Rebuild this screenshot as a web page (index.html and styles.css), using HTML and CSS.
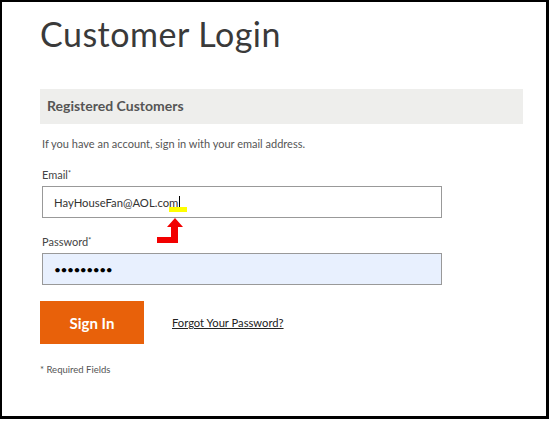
FILE: index.html
```html
<!DOCTYPE html>
<html lang="en">

<head>
    <meta charset="UTF-8">
    <meta name="viewport" content="width=device-width, initial-scale=1.0">
    <title>Customer Login</title>
    <link rel="stylesheet" href="styles.css">
</head>

<body>
    <div class="frame">
        <h1>Customer Login</h1>
        <div class="block-title">Registered Customers</div>
        <form class="login-form" id="loginForm">
            <p class="intro">If you have an account, sign in with your email address.</p>
            <label class="field-label" for="email">Email<span class="req">*</span></label>
            <div class="field-wrap">
                <!-- email field drawn with its caret, like the captured state -->
                <div class="field" id="email">
                    <span class="field-text">HayHouseFan@AOL.com</span><span class="caret"></span>
                    <span class="mark"></span>
                </div>
                <svg class="arrow" width="26" height="25" viewBox="0 0 26 25">
                    <polygon points="18,0 26,9 21,9 21,25 0,25 0,19 14,19 14,9 10,9" fill="#f20000" />
                </svg>
            </div>
            <label class="field-label" for="pass">Password<span class="req">*</span></label>
            <input class="field field-pass" type="password" id="pass" value="abcdefghi">
            <div class="actions">
                <button type="submit" class="btn-signin">Sign In</button>
                <a href="#" class="forgot">Forgot Your Password?</a>
            </div>
            <p class="required-note">* Required Fields</p>
        </form>
    </div>
</body>

</html>
```

FILE: styles.css
```css
body {
    margin: 0;
    background-color: #ffffff;
    font-family: Lato, "Open Sans", Arial, sans-serif;
    color: #333;
}

.frame {
    box-sizing: border-box;
    width: 549px;
    height: 419px;
    border: solid #000;
    border-width: 2px 3px 3px 2px;
    padding: 12px 23px 0 38px;
}

h1 {
    margin: 0;
    font-size: 34px;
    line-height: 40px;
    font-weight: 400;
    letter-spacing: 0.5px;
    color: #3a3a3a;
}

.block-title {
    margin-top: 35px;
    height: 35px;
    line-height: 34px;
    padding: 0 7px;
    background-color: #eeeeec;
    font-size: 14px;
    font-weight: 700;
    color: #555;
}

.login-form {
    padding-left: 2px;
}

.intro {
    margin: 13px 0 0;
    font-size: 11px;
    line-height: 14px;
    color: #555;
}

.field-label {
    display: block;
    margin-top: 17px;
    font-size: 11px;
    line-height: 14px;
    color: #444;
}

.req {
    font-size: 7px;
    vertical-align: top;
    line-height: 10px;
}

.field-wrap {
    position: relative;
    margin-top: 4px;
}

.field {
    box-sizing: border-box;
    display: flex;
    align-items: center;
    position: relative;
    width: 400px;
    height: 32px;
    margin: 0;
    padding: 0 11px;
    border: 1px solid #999;
    background-color: #fff;
    font-family: Lato, "Open Sans", Arial, sans-serif;
    font-size: 11.3px;
    color: #333;
}

.caret {
    display: inline-block;
    width: 1px;
    height: 12px;
    margin-left: 1px;
    background-color: #000;
}

.mark {
    position: absolute;
    left: 126px;
    top: 20px;
    width: 18px;
    height: 5px;
    background-color: #ffff00;
}

.arrow {
    position: absolute;
    left: 115px;
    top: 32px;
}

.field-pass {
    display: block;
    margin-top: 4px;
    background-color: #e8f0fe;
    color: #000;
    font-size: 12px;
    letter-spacing: -0.5px;
    outline: none;
}

.actions {
    display: flex;
    align-items: center;
    margin: 16px 0 0 -2px;
}

.btn-signin {
    width: 104px;
    height: 43px;
    padding: 0;
    border: none;
    background-color: #e8610a;
    color: #ffffff;
    font-family: Lato, "Open Sans", Arial, sans-serif;
    font-size: 15px;
    font-weight: 700;
    cursor: pointer;
}

.forgot {
    margin-left: 28px;
    font-size: 11.2px;
    color: #222;
    text-decoration: underline;
}

.required-note {
    margin: 19px 0 0 -2px;
    font-size: 9.5px;
    line-height: 14px;
    color: #555;
}
```
